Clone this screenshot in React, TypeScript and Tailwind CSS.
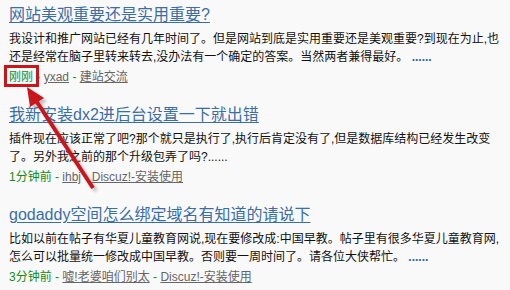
import React from 'react';

const font = { fontFamily: '"Liberation Sans", "Noto Sans CJK SC", sans-serif' };

type Post = {
    title: string;
    lines: React.ReactNode[];
    time: string;
    author: string;
    forum: string;
    boxed?: boolean;
};

const more = <span className="text-[#2a62a8] font-bold"> ......</span>;

const posts: Post[] = [
    {
        title: '网站美观重要还是实用重要?',
        lines: [
            '我设计和推广网站已经有几年时间了。但是网站到底是实用重要还是美观重要?到现在为止,也',
            <>还是经常在脑子里转来转去,没办法有一个确定的答案。当然两者兼得最好。{more}</>,
        ],
        time: '刚刚',
        author: 'yxad',
        forum: '建站交流',
        boxed: true,
    },
    {
        title: '我新安装dx2进后台设置一下就出错',
        lines: [
            '插件现在应该正常了吧?那个就只是执行了,执行后肯定没有了,但是数据库结构已经发生改变',
            '了。另外我之前的那个升级包弄了吗?......',
        ],
        time: '1分钟前',
        author: 'ihbj',
        forum: 'Discuz!-安装使用',
    },
    {
        title: 'godaddy空间怎么绑定域名有知道的请说下',
        lines: [
            '比如以前在帖子有华夏儿童教育网说,现在要修改成:中国早教。帖子里有很多华夏儿童教育网,',
            <>怎么可以批量统一修改成中国早教。否则要一周时间了。请各位大侠帮忙。{more}</>,
        ],
        time: '3分钟前',
        author: '嘘!老婆咱们别太',
        forum: 'Discuz!-安装使用',
    },
];

function PostItem({ post }: { post: Post }) {
    return (
        <div className="h-[100px]">
            <div className="text-[16px] leading-[20px] text-[#3a6ea5] underline underline-offset-2 whitespace-nowrap">
                {post.title}
            </div>
            <div className="mt-[5px] text-[12px] leading-[18px] text-[#111]">
                {post.lines.map((l, i) => (
                    <div key={i} className="whitespace-nowrap">{l}</div>
                ))}
            </div>
            <div className="mt-[2px] text-[12px] leading-[18px] text-[#168a16] whitespace-nowrap flex items-center">
                <span className={post.boxed ? 'relative' : ''}>
                    {post.time}
                    {post.boxed && (
                        <span className="absolute left-[-5px] top-[-3px] w-[35px] h-[22px] border-[3px] border-[#c8161d]" />
                    )}
                </span>
                <span className="whitespace-pre"> - </span>
                <span className="text-[#666] underline">{post.author}</span>
                <span className="whitespace-pre"> - </span>
                <span className="text-[#666] underline">{post.forum}</span>
            </div>
        </div>
    );
}

function Arrow() {
    return (
        <svg className="absolute left-0 top-0 pointer-events-none" width="510" height="290" viewBox="0 0 510 290">
            <defs>
                <filter id="sh" x="-20%" y="-20%" width="140%" height="140%">
                    <feGaussianBlur stdDeviation="1.5" />
                </filter>
            </defs>
            <g opacity="0.35" filter="url(#sh)" transform="translate(3,3)">
                <line x1="93" y1="188" x2="35" y2="99" stroke="#555" strokeWidth="4" />
                <polygon points="27,87 44,98 30,107" fill="#555" />
            </g>
            <line x1="93" y1="188" x2="35" y2="99" stroke="#c8161d" strokeWidth="4" />
            <polygon points="27,87 44,98 30,107" fill="#c8161d" />
        </svg>
    );
}

export default function App() {
    return (
        <div className="relative w-[510px] h-[290px] overflow-hidden bg-[#f9f9f9]" style={font}>
            <div className="pl-[9px] pt-[5px]">
                {posts.map((p) => (
                    <PostItem key={p.title} post={p} />
                ))}
            </div>
            <Arrow />
        </div>
    );
}
